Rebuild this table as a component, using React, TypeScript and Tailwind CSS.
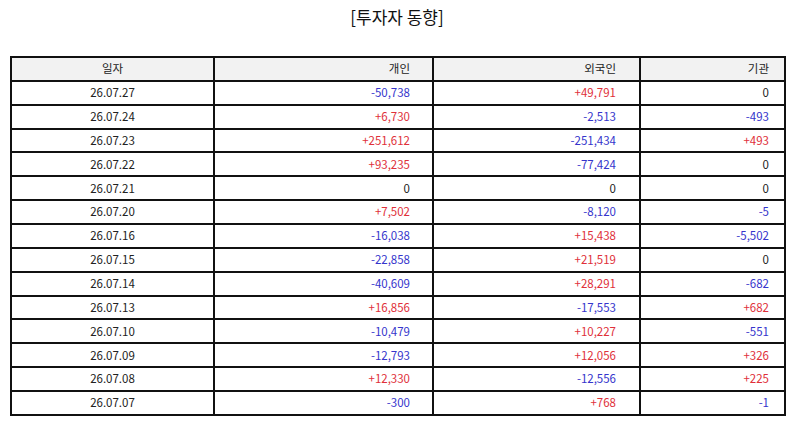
const rows: [string, string, string, string][] = [
    ["26.07.27", "-50,738", "+49,791", "0"],
    ["26.07.24", "+6,730", "-2,513", "-493"],
    ["26.07.23", "+251,612", "-251,434", "+493"],
    ["26.07.22", "+93,235", "-77,424", "0"],
    ["26.07.21", "0", "0", "0"],
    ["26.07.20", "+7,502", "-8,120", "-5"],
    ["26.07.16", "-16,038", "+15,438", "-5,502"],
    ["26.07.15", "-22,858", "+21,519", "0"],
    ["26.07.14", "-40,609", "+28,291", "-682"],
    ["26.07.13", "+16,856", "-17,553", "+682"],
    ["26.07.10", "-10,479", "+10,227", "-551"],
    ["26.07.09", "-12,793", "+12,056", "+326"],
    ["26.07.08", "+12,330", "-12,556", "+225"],
    ["26.07.07", "-300", "+768", "-1"],
];

const tone = (v: string) =>
    v.startsWith("+") ? "text-[#e0303a]" : v.startsWith("-") ? "text-[#3535cc]" : "text-[#222]";

const pads = ["pr-[22px]", "pr-[23px]", "pr-[15px]"];

const App = () => {
    return (
        <div className="w-[794px] h-[425px] bg-white font-['Noto_Sans_CJK_KR',sans-serif] text-[#222]">
            <h1 className="pt-[5px] text-center text-[17px] leading-[24px] text-[#111]">[투자자 동향]</h1>
            <div className="px-[10px] pt-[27px]">
                <table className="w-[774px] border-collapse border-2 border-[#111] text-[11.5px] table-fixed">
                    <colgroup>
                        <col className="w-[203px]" />
                        <col className="w-[219px]" />
                        <col className="w-[207px]" />
                        <col className="w-[145px]" />
                    </colgroup>
                    <thead>
                        <tr className="h-[23.87px] bg-[#f2f2f2]">
                            <th className="border-2 border-[#111] font-normal text-center">일자</th>
                            <th className={`border-2 border-[#111] font-normal text-right ${pads[0]}`}>개인</th>
                            <th className={`border-2 border-[#111] font-normal text-right ${pads[1]}`}>외국인</th>
                            <th className={`border-2 border-[#111] font-normal text-right ${pads[2]}`}>기관</th>
                        </tr>
                    </thead>
                    <tbody>
                        {rows.map(([date, ...vals]) => (
                            <tr key={date} className="h-[23.87px]">
                                <td className="border-2 border-[#111] text-center">{date}</td>
                                {vals.map((v, i) => (
                                    <td key={i} className={`border-2 border-[#111] text-right ${pads[i]} ${tone(v)}`}>
                                        {v}
                                    </td>
                                ))}
                            </tr>
                        ))}
                    </tbody>
                </table>
            </div>
        </div>
    );
};

export default App;
